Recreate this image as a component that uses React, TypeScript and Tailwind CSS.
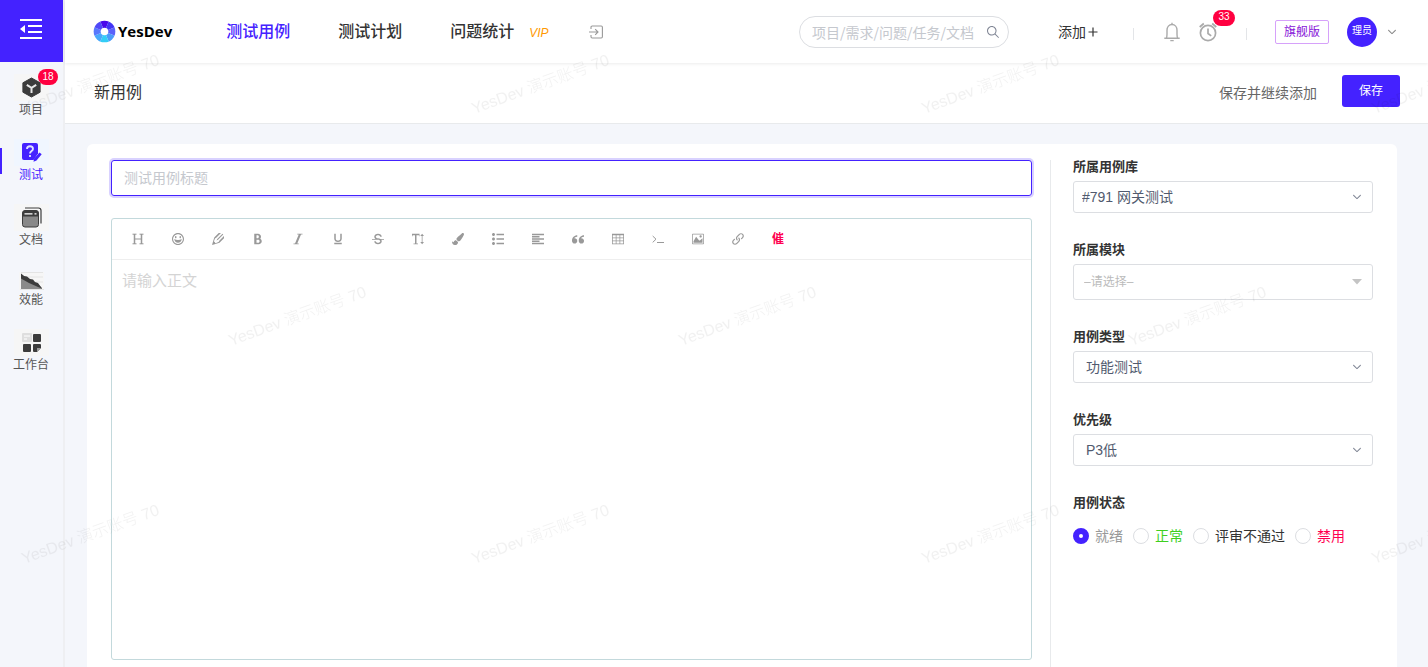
import type { ReactNode } from "react";
import { IoIosArrowDown, IoIosSearch } from "react-icons/io";
import { FaPaintBrush } from "react-icons/fa";
import {
    ImHappy,
    ImPencil2,
    ImBold,
    ImItalic,
    ImUnderline,
    ImStrikethrough,
    ImTextHeight,
    ImList2,
    ImParagraphLeft,
    ImQuotesLeft,
    ImTable2,
    ImImage,
    ImLink,
} from "react-icons/im";

const sideItems = [
    { label: "项目", icon: projectIcon(), badge: 18 },
    { label: "测试", icon: testIcon(), active: true },
    { label: "文档", icon: docIcon() },
    { label: "效能", icon: chartIcon() },
    { label: "工作台", icon: deskIcon() },
];

const tools = [
    { name: "标题", icon: headingIcon() },
    { name: "表情", icon: <ImHappy /> },
    { name: "文字颜色", icon: <ImPencil2 /> },
    { name: "加粗", icon: <ImBold /> },
    { name: "斜体", icon: <ImItalic /> },
    { name: "下划线", icon: <ImUnderline /> },
    { name: "删除线", icon: <ImStrikethrough /> },
    { name: "字号", icon: <ImTextHeight /> },
    { name: "背景色", icon: <FaPaintBrush /> },
    { name: "列表", icon: <ImList2 /> },
    { name: "对齐", icon: <ImParagraphLeft /> },
    { name: "引用", icon: <ImQuotesLeft /> },
    { name: "表格", icon: <ImTable2 /> },
    { name: "代码", icon: terminalIcon() },
    { name: "图片", icon: <ImImage /> },
    { name: "链接", icon: <ImLink /> },
];

const statuses = [
    { label: "就绪", color: "text-[#999999]" },
    { label: "正常", color: "text-[#3ecf1f]" },
    { label: "评审不通过", color: "text-[#333333]" },
    { label: "禁用", color: "text-[#ff0050]" },
];

export default function App() {
    return <div className="relative flex h-screen overflow-hidden bg-[#f4f6fb] text-sm text-[#333333] font-['Liberation_Sans','Noto_Sans_CJK_SC',sans-serif]">
        <Sidebar />
        <div className="flex min-w-0 flex-1 flex-col">
            <Header />
            <TitleBar />
            <main className="flex min-h-0 flex-1 pt-5 pr-[31px] pl-[22px]">
                <div className="flex min-w-0 flex-1 rounded-t-md bg-white px-6">
                    <CaseForm />
                    <div className="mt-4 mr-[22px] ml-[18px] w-px shrink-0 bg-[#e8eaec]" />
                    <CaseSettings />
                </div>
            </main>
        </div>
        <Watermark />
    </div>
}

const Sidebar = () => {
    return <aside className="flex w-[65px] shrink-0 flex-col border-r-2 border-[#eeeff2]">
        <button aria-label="收起菜单" className="flex h-[62px] items-center justify-center bg-[#4422ff] pr-px pb-[5px]">
            <svg width="24" height="20" viewBox="0 0 24 20" fill="none" stroke="#fff" strokeWidth="2">
                <path d="M1 1h22M9 7h14M9 13h14M1 19h22" />
                <path d="M6 6v8L1 10z" fill="#fff" stroke="none" />
            </svg>
        </button>
        <nav className="flex flex-col gap-5 pt-3">
            {sideItems.map((item) => (
                <a
                    key={item.label}
                    href="#"
                    className={`relative flex flex-col items-center pr-px text-xs/[18px] ${item.active ? "text-[#4422ff]" : "text-[#555555]"}`}
                >
                    {item.active && <span className="absolute top-[9px] left-0 h-[26px] w-[2px] bg-[#4422ff]" />}
                    {item.icon}
                    <span>{item.label}</span>
                    {item.badge && (
                        <span className="absolute -top-[5px] left-[38px] flex h-4 w-5 items-center justify-center rounded-full bg-[#ff0040] text-[10px] text-white">
                            {item.badge}
                        </span>
                    )}
                </a>
            ))}
        </nav>
    </aside>
}

const Header = () => {
    return <header className="z-10 flex h-[63px] shrink-0 items-center bg-white pr-[30px] pl-[28px] shadow-[0_1px_3px_rgba(0,0,0,0.08)]">
        <a href="#" className="flex items-center gap-[2px] font-['Open_Sans',sans-serif] text-[15px] font-bold text-black">
            {logoIcon()}
            <span>YesDev</span>
        </a>
        <nav className="ml-[54px] flex items-center gap-12 text-base font-medium whitespace-nowrap">
            <a href="#" className="text-[#4422ff]">测试用例</a>
            <a href="#">测试计划</a>
            <a href="#">问题统计</a>
        </nav>
        <span className="ml-[15px] pt-[2px] text-xs font-medium text-[#ff9900] italic">VIP</span>
        <button aria-label="展开" className="ml-10">
            <svg width="14" height="14" viewBox="0 0 14 14" fill="none" stroke="#999" strokeWidth="1.1">
                <path d="M2 4V2.2Q2 1 3.2 1h9Q13.4 1 13.4 2.2v9.6Q13.4 13 12.2 13h-9Q2 13 2 11.8V10" />
                <path d="M0 7h9M6.2 4.2L9 7l-2.8 2.8" />
            </svg>
        </button>
        <div className="ml-auto flex items-center">
            <label className="flex h-8 w-[210px] items-center rounded-full border border-[#dcdee2] pr-[7px] pl-3">
                <input
                    aria-label="搜索"
                    placeholder="项目/需求/问题/任务/文档"
                    className="min-w-0 flex-1 font-['Noto_Sans_CJK_SC',sans-serif] outline-none placeholder:text-[#c5c8ce]"
                />
                <IoIosSearch className="size-4 text-[#808695]" />
            </label>
            <button className="ml-[49px] flex items-center gap-[2px]">
                添加
                <svg width="10" height="10" viewBox="0 0 10 10" stroke="#333" strokeWidth="1.2"><path d="M5 .5v9M.5 5h9" /></svg>
            </button>
            <span className="mt-1 ml-[35px] h-3 w-px bg-[#e3e5e8]" />
            <button aria-label="通知" className="ml-[30px]">{bellIcon()}</button>
            <button aria-label="提醒" className="relative ml-[19px]">
                {clockIcon()}
                <span className="absolute -top-3 left-[14px] flex h-4 w-[22px] items-center justify-center rounded-full bg-[#ff0040] text-[10px] text-white">33</span>
            </button>
            <span className="mt-1 ml-[29px] h-3 w-px bg-[#e3e5e8]" />
            <span className="ml-[28px] flex h-6 w-[54px] items-center justify-center rounded-[2px] border border-[#d6a1fa] text-xs text-[#8714d8]">旗舰版</span>
            <button className="ml-[18px] flex items-center gap-[9px]">
                <span className="flex size-[30px] items-center justify-center rounded-full bg-[#4422ff] text-[10px] text-white">理员</span>
                <IoIosArrowDown className="size-3 text-[#888888]" />
            </button>
        </div>
    </header>
}

const TitleBar = () => {
    return <div className="flex h-[61px] shrink-0 items-center border-b border-[#e8eaec] bg-white pr-7 pl-[29px]">
        <h1 className="text-base">新用例</h1>
        <button className="ml-auto text-[#666666]">保存并继续添加</button>
        <button className="mb-1 ml-[25px] h-8 w-[58px] rounded-[3px] bg-[#4422ff] text-xs text-white">保存</button>
    </div>
}

const CaseForm = () => {
    return <div className="flex min-w-0 flex-1 flex-col pt-4 pb-[7px]">
        <input
            aria-label="测试用例标题"
            placeholder="测试用例标题"
            className="h-9 w-full rounded-[3px] border border-[#4422ff] px-3 ring-2 ring-[#d9d2ff] outline-none placeholder:text-[#c5c8ce]"
        />
        <div className="mt-[22px] flex flex-1 flex-col rounded-[3px] border border-[#c3d9dc]">
            <div className="flex h-[41px] items-center border-b border-[#eeeeee] pl-[6px] text-xs text-[#999999]">
                {tools.map((tool) => (
                    <button key={tool.name} aria-label={tool.name} className="flex w-10 justify-center">{tool.icon}</button>
                ))}
                <button className="w-10 font-bold text-[#ff0050]">催</button>
            </div>
            <textarea
                aria-label="正文"
                placeholder="请输入正文"
                className="w-full flex-1 resize-none px-[10px] py-[9px] text-[15px]/6 outline-none placeholder:text-[#d4d4d4]"
            />
        </div>
    </div>
}

interface FieldProps {
    id: string;
    label: string;
    value: string;
    className?: string;
    arrow?: ReactNode;
}

const Field = ({ id, label, value, className = "h-8 pl-3 text-[#515a6e]", arrow }: FieldProps) => {
    return <div className="flex flex-col gap-1">
        <label htmlFor={id} className="text-[13px]/5 font-bold">{label}</label>
        <div className="relative">
            <select id={id} className={`block w-full appearance-none rounded-[3px] border border-[#dcdee2] bg-white pr-8 ${className}`}>
                <option>{value}</option>
            </select>
            <span className="pointer-events-none absolute inset-y-0 right-[10px] flex items-center">
                {arrow ?? <IoIosArrowDown className="size-3 text-[#808695]" />}
            </span>
        </div>
    </div>
}

const CaseSettings = () => {
    return <div className="flex w-[300px] shrink-0 flex-col gap-[27px] pt-[13px]">
        <Field id="library" label="所属用例库" value="#791 网关测试" className="h-8 pl-2 text-[#515a6e]" />
        <Field
            id="module"
            label="所属模块"
            value="–请选择–"
            className="h-9 pl-[10px] text-xs text-[#bbbbbb]"
            arrow={<svg width="12" height="6" viewBox="0 0 12 6" fill="#c4c4c4"><path d="M1 0h10L6 5.5z" /></svg>}
        />
        <Field id="type" label="用例类型" value="功能测试" />
        <Field id="priority" label="优先级" value="P3低" />
        <fieldset>
            <legend className="text-[13px]/5 font-bold">用例状态</legend>
            <div className="mt-[13px] flex gap-[10px] whitespace-nowrap">
                {statuses.map((status, i) => (
                    <label key={status.label} className={`flex items-center gap-[6px] ${status.color}`}>
                        <input
                            type="radio"
                            name="status"
                            defaultChecked={i === 0}
                            className="size-4 appearance-none rounded-full border border-[#dcdee2] bg-white checked:border-[6px] checked:border-[#4422ff]"
                        />
                        {status.label}
                    </label>
                ))}
            </div>
        </fieldset>
    </div>
}

const Watermark = () => {
    return <svg aria-hidden="true" className="pointer-events-none absolute inset-0 z-20 size-full">
        <defs>
            <pattern id="mark" width="450" height="450" patternUnits="userSpaceOnUse">
                <g className="font-light" fill="#000" fillOpacity="0.055" fontSize="16">
                    <text transform="translate(24 114) rotate(-20)">YesDev 演示账号 70</text>
                    <text transform="translate(231 346) rotate(-20)">YesDev 演示账号 70</text>
                </g>
            </pattern>
        </defs>
        <rect width="100%" height="100%" fill="url(#mark)" />
    </svg>
}

function logoIcon() {
    return <svg width="23" height="23" viewBox="-12 -12 24 24">
        <clipPath id="logo-ring"><circle r="11.300" /></clipPath>
        <g clipPath="url(#logo-ring)">
            <path d="M0 0L-5-12H5z" fill="#4a08ea" />
            <path d="M0 0L5-12H12V-5z" fill="#4233f5" />
            <path d="M0 0L12-5V5z" fill="#5a62fa" />
            <path d="M0 0L12 5V12H5z" fill="#4b9bfa" />
            <path d="M0 0L5 12H-5z" fill="#33cdf6" />
            <path d="M0 0L-5 12H-12V5z" fill="#48a8fb" />
            <path d="M0 0L-12 5V-5z" fill="#5878fc" />
            <path d="M0 0L-12-5V-12H-5z" fill="#5048f8" />
        </g>
        <circle r="4" fill="#fff" />
    </svg>
}

function bellIcon() {
    return <svg width="16" height="20" viewBox="0 0 16 20" fill="none" stroke="#aaa" strokeWidth="1.4">
        <path d="M.3 16.3h15.4M2.2 16.3c.8-1 .8-2 .8-4V8.200C3 5 5 2.500 8 2.500s5 2.500 5 5.700v4.100c0 2 0 3 .8 4M8 .7v1.800M6.300 18.600h3.400" />
    </svg>
}

function clockIcon() {
    return <svg width="18" height="20" viewBox="0 0 18 20" fill="none" stroke="#aaa" strokeWidth="1.700">
        <circle cx="9" cy="11" r="7.600" />
        <path d="M9 6.500V11.500l3.200 2.400M.7 5L4.800 1.500M17.300 5l-4.100-3.500" />
    </svg>
}

function headingIcon() {
    return <svg width="12" height="12" viewBox="0 0 12 12" fill="none" stroke="currentColor">
        <path d="M2.500 1v10M9.500 1v10" strokeWidth="1.500" />
        <path d="M.5 1.200h4M7.500 1.200h4M.5 10.800h4M7.500 10.800h4M2.500 6h7" />
    </svg>
}

function terminalIcon() {
    return <svg width="12" height="12" viewBox="0 0 12 12" fill="none" stroke="currentColor">
        <path d="M.7 3L4 6.200.7 9.400M5 9.500h7" />
    </svg>
}

function projectIcon() {
    return <svg width="35" height="27" viewBox="0 0 35 27">
        <rect width="35" height="27" fill="#f6f6f6" />
        <path d="M17.500 4l8.600 4.800v9.400l-8.600 4.800-8.600-4.800V8.800z" fill="#3c3c3c" stroke="#3c3c3c" strokeLinejoin="round" />
        <path d="M12.800 10.800l4.700 3 4.700-3M17.500 13.500v5.500" fill="none" stroke="#e8e8e8" strokeWidth="2" />
    </svg>
}

function testIcon() {
    return <svg width="35" height="27" viewBox="0 0 35 27">
        <rect width="35" height="27" fill="#f0f6ff" />
        <path d="M10 4h12q2 0 2 2v8.500l-4.500 6.500H10q-2 0-2-2V6q0-2 2-2z" fill="#4422ff" />
        <path d="M13 10c0-3.700 6-3.700 6 0 0 2-3 2.200-3 4.500M16 16v2" fill="none" stroke="#dfe4ff" strokeWidth="1.800" />
        <path d="M25.500 13.500l2.200 1.700-5.200 6.300-3 1.300.6-3.200z" fill="#4422ff" />
    </svg>
}

function docIcon() {
    return <svg width="35" height="27" viewBox="0 0 35 27">
        <rect width="35" height="27" fill="#f6f6f6" />
        <path d="M11 4h13.500q2.500 0 2.500 2.500v13" fill="none" stroke="#3c3c3c" strokeWidth="1.200" />
        <rect x="8.500" y="6.500" width="16" height="16.500" rx="2.500" fill="#888" stroke="#3c3c3c" />
        <path d="M8.500 12.500V9q0-2.500 2.500-2.500h11q2.500 0 2.500 2.500v3.500z" fill="#3c3c3c" />
        <path d="M10.500 9.800h8M20.500 9.800h2" stroke="#fff" strokeWidth="1.200" />
    </svg>
}

function chartIcon() {
    return <svg width="35" height="22" viewBox="0 0 35 22">
        <rect x="5" y="3" width="25" height="18" fill="#f6f6f6" />
        <path d="M7 3.500h22M7 8h22M7 13h22M6 20.500h24" stroke="#e4e4e4" />
        <path d="M7 5l3 2 2 2 3 1 3 2 3 2 3 1 4 4v1H7z" fill="#8a8a8a" />
        <path d="M7 4.500l3 2.500 3 .5 3 2.500 3 .5 2 2.500 3 1 4 5.500-4-1.500-9-4L7 9.500z" fill="#3c3c3c" />
    </svg>
}

function deskIcon() {
    return <svg width="35" height="27" viewBox="0 0 35 27">
        <rect width="35" height="27" fill="#f6f6f6" />
        <rect x="8" y="4" width="10" height="9" rx="1" fill="#dedede" />
        <path d="M10 7h6M10 10h3" stroke="#fff" />
        <rect x="19" y="5" width="8" height="8" rx="1" fill="#3c3c3c" />
        <rect x="9" y="15" width="8" height="8" rx="1" fill="#3c3c3c" />
        <path d="M20 15h6q1 0 1 1v3l-4 4h-3q-1 0-1-1v-6q0-1 1-1z" fill="#3c3c3c" />
        <path d="M23 23v-4h4z" fill="#999" />
    </svg>
}
